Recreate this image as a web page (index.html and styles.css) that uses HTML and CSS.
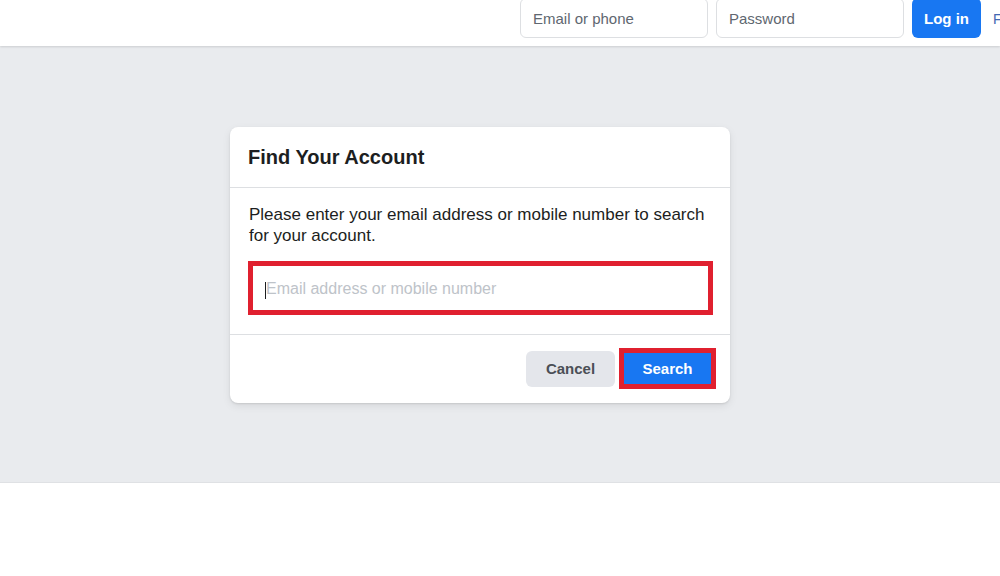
FILE: index.html
```html
<!DOCTYPE html>
<html lang="en">
<head>
<meta charset="utf-8">
<title>Find Your Account</title>
<link rel="stylesheet" href="styles.css">
</head>
<body>
<header class="topbar">
  <form class="login">
    <div class="login-field">Email or phone</div>
    <div class="login-field">Password</div>
    <button type="button" class="login-btn">Log in</button>
    <a class="forgot" href="#">Forgot account?</a>
  </form>
</header>
<main class="stage">
  <section class="card">
    <h2 class="card-title">Find Your Account</h2>
    <div class="card-body">
      <p class="card-text">Please enter your email address or mobile number to search for your account.</p>
      <div class="search-field"><span class="caret"></span><span class="placeholder">Email address or mobile number</span></div>
    </div>
    <div class="card-actions">
      <button type="button" class="btn btn-cancel">Cancel</button>
      <button type="button" class="btn btn-search">Search</button>
    </div>
  </section>
</main>
<footer class="foot"></footer>
</body>
</html>
```

FILE: styles.css
```css
html, body {
  margin: 0;
  padding: 0;
  background: #ffffff;
  font-family: "Liberation Sans", Arial, sans-serif;
  overflow: hidden;
}

.topbar {
  height: 46px;
  background: #ffffff;
  box-shadow: 0 1px 2px rgba(0, 0, 0, 0.12);
  position: relative;
  z-index: 1;
}

.login {
  display: flex;
  align-items: flex-end;
  height: 38px;
  padding-left: 520px;
  white-space: nowrap;
  margin: 0;
}

.login-field {
  box-sizing: border-box;
  width: 188px;
  height: 40px;
  margin-right: 8px;
  border: 1px solid #dddfe2;
  border-radius: 6px;
  padding: 0 12px;
  font-size: 15px;
  line-height: 40px;
  color: #606770;
  flex: none;
}

.login-btn {
  flex: none;
  box-sizing: border-box;
  width: 69px;
  height: 40px;
  border: none;
  border-radius: 6px;
  background: #1877f2;
  color: #ffffff;
  font-family: "Liberation Sans", Arial, sans-serif;
  font-size: 15px;
  font-weight: bold;
  padding: 0;
  margin-right: 12px;
}

.forgot {
  flex: none;
  font-size: 14px;
  line-height: 38px;
  color: #4267b2;
  text-decoration: none;
}

.stage {
  height: 437px;
  background: #e9ebee;
  box-sizing: border-box;
  padding-top: 81px;
  border-bottom: 1px solid #dfe1e4;
}

.card {
  width: 500px;
  margin-left: 230px;
  background: #ffffff;
  border-radius: 8px;
  box-shadow: 0 1px 2px rgba(0, 0, 0, 0.1), 0 3px 8px rgba(0, 0, 0, 0.08);
}

.card-title {
  margin: 0;
  padding: 18px 18px 18px;
  font-size: 20px;
  line-height: 24px;
  font-weight: bold;
  color: #1c1e21;
  border-bottom: 1px solid #dddfe2;
}

.card-body {
  padding: 16px 17px 19px 18px;
  border-bottom: 1px solid #dddfe2;
}

.card-text {
  margin: 0 0 15px 1px;
  font-size: 17px;
  line-height: 21px;
  color: #1c1e21;
}

.search-field {
  box-sizing: border-box;
  height: 54px;
  border: 5px solid #e0202f;
  padding-left: 12px;
  padding-top: 2px;
  display: flex;
  align-items: center;
}

.caret {
  width: 1px;
  height: 17px;
  background: #1c1e21;
  margin-top: 2px;
}

.placeholder {
  font-size: 16px;
  color: #bec3c9;
}

.card-actions {
  display: flex;
  justify-content: flex-end;
  align-items: center;
  gap: 4px;
  padding: 13px 14px 14px;
}

.btn {
  font-family: "Liberation Sans", Arial, sans-serif;
  font-size: 15px;
  font-weight: bold;
  border: none;
  cursor: pointer;
}

.btn-cancel {
  width: 89px;
  height: 36px;
  border-radius: 6px;
  background: #e4e6eb;
  color: #4b4f56;
}

.btn-search {
  box-sizing: border-box;
  width: 97px;
  height: 41px;
  border: 5px solid #e0202f;
  background: #1877f2;
  color: #ffffff;
  padding: 0;
}

.foot {
  height: 93px;
  background: #ffffff;
}
```
